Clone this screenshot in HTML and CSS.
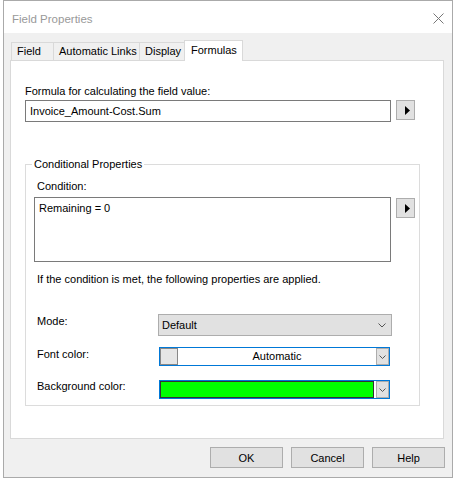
FILE: index.html
```html
<!DOCTYPE html>
<html lang="en">

<head>
    <meta charset="UTF-8">
    <meta name="viewport" content="width=device-width, initial-scale=1.0">
    <title>Field Properties</title>
    <link rel="stylesheet" href="styles.css">
</head>

<body>
    <div class="window">
        <div class="titlebar">
            <span class="title">Field Properties</span>
            <svg class="close" width="11" height="11" viewBox="0 0 11 11">
                <path d="M0.5 0.5 L10.5 10.5 M10.5 0.5 L0.5 10.5" stroke="#777" stroke-width="1" fill="none" />
            </svg>
        </div>
        <div class="client">
            <div class="tabs">
                <div class="tab tab-field">Field</div>
                <div class="tab tab-links">Automatic Links</div>
                <div class="tab tab-display">Display</div>
                <div class="tab tab-formulas active">Formulas</div>
            </div>
            <div class="panel">
                <div class="label">Formula for calculating the field value:</div>
                <div class="edit-row">
                    <div class="edit">Invoice_Amount-Cost.Sum</div>
                    <button class="arrow-btn">
                        <svg width="5" height="9" viewBox="0 0 5 9"><path d="M0 0 L5 4.5 L0 9 Z" fill="#000" /></svg>
                    </button>
                </div>

                <fieldset class="group">
                    <legend>Conditional Properties</legend>
                    <div class="label cond-label">Condition:</div>
                    <div class="edit-row">
                        <div class="memo">Remaining = 0</div>
                        <button class="arrow-btn">
                            <svg width="5" height="9" viewBox="0 0 5 9"><path d="M0 0 L5 4.5 L0 9 Z" fill="#000" /></svg>
                        </button>
                    </div>
                    <p class="hint">If the condition is met, the following properties are applied.</p>

                    <div class="prop-row mode-row">
                        <span class="prop-label">Mode:</span>
                        <div class="select">
                            <span>Default</span>
                            <svg width="8" height="5" viewBox="0 0 8 5"><path d="M0.5 0.5 L4 4 L7.5 0.5" stroke="#555" fill="none" /></svg>
                        </div>
                    </div>
                    <div class="prop-row font-row">
                        <span class="prop-label">Font color:</span>
                        <div class="color-combo">
                            <span class="swatch"></span>
                            <span class="combo-text">Automatic</span>
                            <span class="drop-btn">
                                <svg width="7" height="4" viewBox="0 0 7 4"><path d="M0.5 0.5 L3.5 3.5 L6.5 0.5" stroke="#555" fill="none" /></svg>
                            </span>
                        </div>
                    </div>
                    <div class="prop-row back-row">
                        <span class="prop-label">Background color:</span>
                        <div class="color-combo">
                            <span class="swatch-fill"></span>
                            <span class="drop-btn">
                                <svg width="7" height="4" viewBox="0 0 7 4"><path d="M0.5 0.5 L3.5 3.5 L6.5 0.5" stroke="#555" fill="none" /></svg>
                            </span>
                        </div>
                    </div>
                </fieldset>
            </div>
            <div class="buttons">
                <button class="btn">OK</button>
                <button class="btn">Cancel</button>
                <button class="btn">Help</button>
            </div>
        </div>
    </div>
</body>

</html>
```

FILE: styles.css
```css
* {
    box-sizing: border-box;
}

body {
    margin: 0;
    padding: 0;
    background-color: #fff;
    font-family: "Liberation Sans", Arial, sans-serif;
    font-size: 11px;
    line-height: 16px;
    color: #000;
}

button {
    font-family: inherit;
    font-size: 11px;
    color: #000;
    padding: 0;
}

.window {
    margin-left: 3px;
    width: 450px;
    height: 478px;
    border: 1px solid #aaa;
    display: flex;
    flex-direction: column;
}

.titlebar {
    height: 32px;
    background-color: #fff;
    display: flex;
    align-items: center;
    justify-content: space-between;
    padding: 0 8px 0 8px;
}

.title {
    color: #999;
    font-size: 11.5px;
    margin-top: 3px;
}

.close {
    margin-top: 3px;
}

.client {
    flex: 1;
    background-color: #f0f0f0;
    padding: 7px 6px 0 6px;
    display: flex;
    flex-direction: column;
}

/* tab strip */
.tabs {
    display: flex;
    align-items: flex-end;
    padding-left: 1px;
}

.tab {
    height: 18px;
    border: 1px solid #d9d9d9;
    border-bottom: none;
    line-height: 17px;
    padding-left: 5px;
    white-space: nowrap;
}

.tab + .tab {
    margin-left: -1px;
}

.tab-field {
    width: 43px;
}

.tab-links {
    width: 87px;
}

.tab-display {
    width: 46px;
}

.tab-formulas {
    width: 59px;
}

.tab.active {
    height: 21px;
    line-height: 18px;
    padding-left: 6px;
    background-color: #fff;
    margin-bottom: -1px;
    position: relative;
    z-index: 1;
}

.panel {
    width: 434px;
    height: 379px;
    border: 1px solid #d9d9d9;
    background-color: #fff;
    padding: 22px 0 0 14px;
}

.edit-row {
    display: flex;
    align-items: flex-start;
}

.edit {
    margin-top: 1px;
    width: 366px;
    height: 22px;
    border: 1px solid #7a7a7a;
    padding-left: 4px;
    line-height: 20px;
}

.arrow-btn {
    margin-left: 5px;
    margin-top: 1px;
    width: 19px;
    height: 20px;
    background-color: #e1e1e1;
    border: 1px solid #adadad;
    display: flex;
    align-items: center;
    justify-content: center;
}

.arrow-btn svg {
    margin-left: 3px;
}

/* conditional properties group */
.group {
    margin: 34px 0 0 0;
    padding: 0 0 6px 8px;
    width: 395px;
    border: 1px solid #dcdcdc;
    min-width: 0;
}

.group legend {
    margin-left: -2px;
    padding: 0 2px;
    line-height: 16px;
}

.cond-label {
    margin: 6px 0 0 3px;
}

.memo {
    margin-top: 3px;
    width: 357px;
    height: 65px;
    border: 1px solid #7a7a7a;
    padding: 2px 4px;
}

.group .arrow-btn {
    margin-top: 4px;
}

.hint {
    margin: 9px 0 0 3px;
}

.prop-row {
    display: flex;
    align-items: flex-start;
    margin-left: 3px;
}

.prop-label {
    width: 121px;
}

.mode-row {
    margin-top: 26px;
}

.font-row {
    margin-top: 10px;
}

.back-row {
    margin-top: 12px;
}

.select {
    margin-top: 1px;
    width: 234px;
    height: 22px;
    background-color: #e1e1e1;
    border: 1px solid #adadad;
    display: flex;
    align-items: center;
    justify-content: space-between;
    padding: 0 5px 0 3px;
}

.color-combo {
    margin-top: 1px;
    margin-left: 1px;
    width: 231px;
    height: 19px;
    border: 1px solid #0078d7;
    display: flex;
    background-color: #fff;
}

.back-row .color-combo {
    margin-top: 2px;
}

.swatch {
    width: 18px;
    background-color: #e6e6e6;
    border: 1px solid #888;
}

.combo-text {
    flex: 1;
    text-align: center;
    line-height: 17px;
}

.swatch-fill {
    width: 214px;
    background-color: #00ff00;
    border: 1px solid #333;
    margin-right: 2px;
}

.drop-btn {
    margin-left: auto;
    width: 13px;
    background-color: #e1e1e1;
    border: 1px solid #adadad;
    display: flex;
    align-items: center;
    justify-content: center;
}

/* dialog buttons */
.buttons {
    display: flex;
    justify-content: flex-end;
    gap: 8px;
    margin-top: 8px;
    padding-right: 1px;
}

.btn {
    width: 73px;
    height: 21px;
    background-color: #e1e1e1;
    border: 1px solid #adadad;
}
```
